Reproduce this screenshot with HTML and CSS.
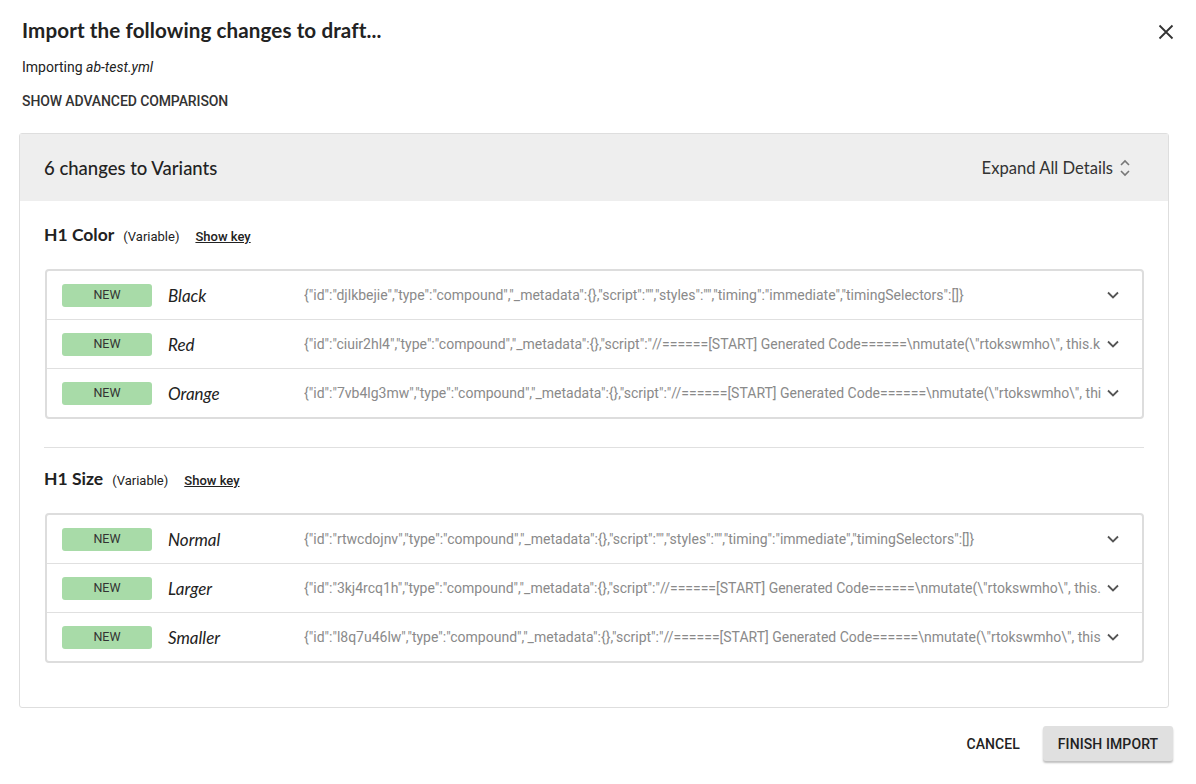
FILE: index.html
```html
<!DOCTYPE html>
<html>
<head>
<meta charset="utf-8">
<link rel="stylesheet" href="styles.css">
</head>
<body>
<div class="dialog">
  <div class="title-row">
    <h1 class="title">Import the following changes to draft...</h1>
    <button class="close" aria-label="Close">
      <svg width="16" height="16" viewBox="0 0 16 16"><path d="M1.5 1.5L14.5 14.5M14.5 1.5L1.5 14.5" stroke="#333" stroke-width="1.8" fill="none"/></svg>
    </button>
  </div>
  <p class="importing">Importing <em>ab-test.yml</em></p>
  <div class="advanced">SHOW ADVANCED COMPARISON</div>

  <div class="panel">
    <div class="panel-head">
      <span class="panel-title">6 changes to Variants</span>
      <span class="expand">Expand All Details
        <svg class="updown" width="10" height="18" viewBox="0 0 10 18"><path d="M1 6L5 2L9 6M1 12L5 16L9 12" stroke="#777" stroke-width="1.6" fill="none"/></svg>
      </span>
    </div>
    <div class="panel-body">
      <div class="section">
        <div class="sec-head"><span class="sec-name">H1 Color</span><span class="sec-type">(Variable)</span><a class="show-key">Show key</a></div>
        <div class="table">
          <div class="row"><span class="badge">NEW</span><span class="name">Black</span><span class="json">{"id":"djlkbejie","type":"compound","_metadata":{},"script":"","styles":"","timing":"immediate","timingSelectors":[]}</span><svg class="chev" width="14" height="10" viewBox="0 0 14 10"><path d="M2 2.5L7 7.5L12 2.5" stroke="#555" stroke-width="1.8" fill="none"/></svg></div>
          <div class="row"><span class="badge">NEW</span><span class="name">Red</span><span class="json">{"id":"ciuir2hl4","type":"compound","_metadata":{},"script":"//======[START] Generated Code======\nmutate(\"rtokswmho\", this.k</span><svg class="chev" width="14" height="10" viewBox="0 0 14 10"><path d="M2 2.5L7 7.5L12 2.5" stroke="#555" stroke-width="1.8" fill="none"/></svg></div>
          <div class="row"><span class="badge">NEW</span><span class="name">Orange</span><span class="json">{"id":"7vb4lg3mw","type":"compound","_metadata":{},"script":"//======[START] Generated Code======\nmutate(\"rtokswmho\", thi</span><svg class="chev" width="14" height="10" viewBox="0 0 14 10"><path d="M2 2.5L7 7.5L12 2.5" stroke="#555" stroke-width="1.8" fill="none"/></svg></div>
        </div>
      </div>
      <div class="divider"></div>
      <div class="section">
        <div class="sec-head"><span class="sec-name">H1 Size</span><span class="sec-type">(Variable)</span><a class="show-key">Show key</a></div>
        <div class="table">
          <div class="row"><span class="badge">NEW</span><span class="name">Normal</span><span class="json">{"id":"rtwcdojnv","type":"compound","_metadata":{},"script":"","styles":"","timing":"immediate","timingSelectors":[]}</span><svg class="chev" width="14" height="10" viewBox="0 0 14 10"><path d="M2 2.5L7 7.5L12 2.5" stroke="#555" stroke-width="1.8" fill="none"/></svg></div>
          <div class="row"><span class="badge">NEW</span><span class="name">Larger</span><span class="json">{"id":"3kj4rcq1h","type":"compound","_metadata":{},"script":"//======[START] Generated Code======\nmutate(\"rtokswmho\", this.</span><svg class="chev" width="14" height="10" viewBox="0 0 14 10"><path d="M2 2.5L7 7.5L12 2.5" stroke="#555" stroke-width="1.8" fill="none"/></svg></div>
          <div class="row"><span class="badge">NEW</span><span class="name">Smaller</span><span class="json">{"id":"l8q7u46lw","type":"compound","_metadata":{},"script":"//======[START] Generated Code======\nmutate(\"rtokswmho\", this</span><svg class="chev" width="14" height="10" viewBox="0 0 14 10"><path d="M2 2.5L7 7.5L12 2.5" stroke="#555" stroke-width="1.8" fill="none"/></svg></div>
        </div>
      </div>
    </div>
  </div>

  <div class="actions">
    <button class="btn-cancel">CANCEL</button>
    <button class="btn-finish">FINISH IMPORT</button>
  </div>
</div>
</body>
</html>
```

FILE: styles.css
```css
* { box-sizing: border-box; }
html, body { margin: 0; padding: 0; background: #fff; }
body { font-family: Roboto, "Liberation Sans", Arial, sans-serif; color: #222; }

.dialog { width: 1196px; height: 784px; padding: 0 23px 0 19px; }

.title-row { display: flex; align-items: center; justify-content: space-between; height: 59px; padding-left: 3px; }
.title { margin: 0; font-family: Lato, "Noto Sans", sans-serif; font-weight: 700; font-size: 20.6px; color: #222; letter-spacing: 0.1px; }
.close { border: 0; background: none; padding: 0; width: 18px; height: 18px; display: flex; align-items: center; justify-content: center; margin-right: -2px; margin-top: 4px; }

.importing { margin: 0; padding-left: 3px; font-size: 14px; line-height: 16px; color: #222; }
.importing em { font-style: italic; }
.advanced { padding-left: 3px; margin-top: 18px; font-size: 14px; font-weight: 500; line-height: 16px; color: #333; letter-spacing: -0.1px; }

.panel { margin-top: 24px; width: 1150px; border: 1px solid #dedede; border-radius: 3px; }
.panel-head { height: 67px; background: #eeeeee; display: flex; align-items: center; justify-content: space-between; padding: 0 38px 0 24px; }
.panel-title { font-family: Lato, "Noto Sans", sans-serif; font-size: 18.5px; font-weight: 500; color: #222; }
.expand { display: flex; align-items: center; gap: 7px; font-family: Lato, "Noto Sans", sans-serif; font-size: 16.6px; color: #333; }
.updown { margin-top: 1px; }

.panel-body { padding: 23px 24px 44px 24px; }
.sec-head { display: flex; align-items: baseline; height: 24px; }
.sec-name { font-family: Lato, "Noto Sans", sans-serif; font-size: 17.5px; font-weight: 700; color: #222; }
.sec-type { font-size: 13px; margin-left: 9px; color: #222; }
.show-key { font-size: 13px; font-weight: 500; margin-left: 16px; text-decoration: underline; color: #222; }

.table { margin-top: 21px; margin-left: 1px; border: 2px solid #dddddd; border-radius: 4px; }
.row { display: flex; align-items: center; height: 49px; padding: 0 22px 0 15px; border-top: 1px solid #e0e0e0; }
.row:first-child { border-top: 0; height: 48px; }
.badge { flex: none; width: 90px; height: 23px; line-height: 22px; background: #a8dba8; border-radius: 3px; text-align: center; font-size: 12.5px; color: #333; }
.name { flex: none; width: 136px; margin-left: 16px; font-family: Lato, "Noto Sans", sans-serif; font-style: italic; font-size: 17px; color: #222; }
.json { flex: 1; min-width: 0; overflow: hidden; white-space: nowrap; font-size: 14px; color: #8a8a8a; }
.chev { flex: none; margin-left: 4px; }

.divider { height: 1px; background: #e0e0e0; margin: 28px 0 20px 0; }

.actions { display: flex; justify-content: flex-end; align-items: center; margin-top: 18px; }
.btn-cancel { border: 0; background: none; font-family: Roboto, sans-serif; font-size: 14px; font-weight: 500; color: #222; padding: 0; margin-right: 23px; letter-spacing: 0.1px; }
.btn-finish { border: 0; background: #e0e0e0; border-radius: 3px; width: 130px; height: 35px; font-family: Roboto, sans-serif; font-size: 14px; font-weight: 500; color: #222; box-shadow: 0 2px 2px rgba(0,0,0,0.25); letter-spacing: 0.1px; margin-right: 0; }
```
